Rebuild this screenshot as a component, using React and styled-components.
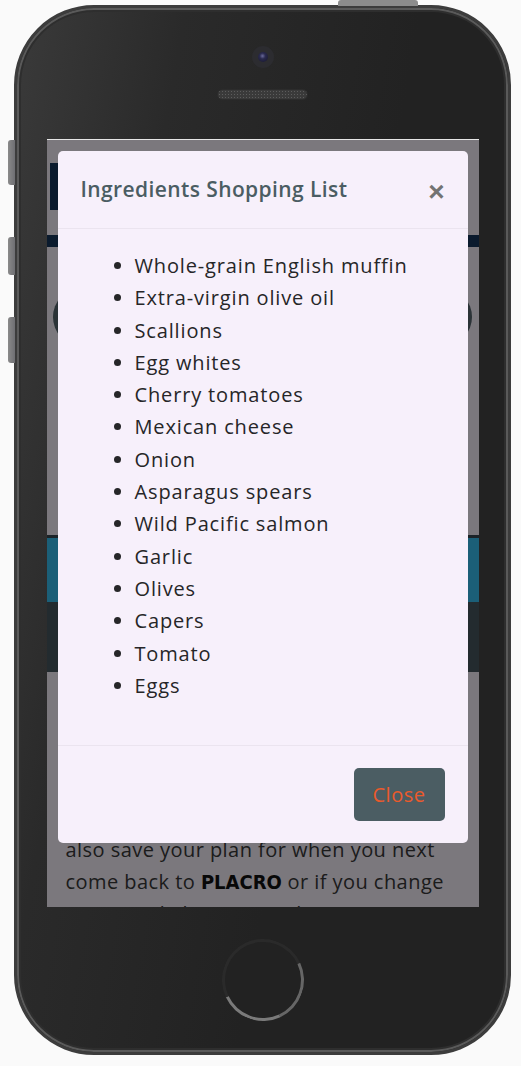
import React from "react";
import styled, { createGlobalStyle } from "styled-components";

const GlobalStyle = createGlobalStyle`
  html, body { margin: 0; padding: 0; background: #fafafa; }
  * { box-sizing: border-box; }
`;

const Stage = styled.div`
  width: 521px;
  height: 1066px;
  padding: 5px 0 0 14px;
  overflow: hidden;
`;

const Phone = styled.div`
  position: relative;
  width: 497px;
  height: 1050px;
  border-radius: 80px;
  border: 3px solid #3c3c3c;
  background: linear-gradient(100deg, #3a3a3a 0%, #2a2a2a 25%, #222 60%, #222 100%);
  box-shadow: inset 0 0 0 2px #5a5a5a, inset 0 0 0 4px #2e2e2e;
  display: flex;
  flex-direction: column;
  align-items: center;
`;

const SideButton = styled.div`
  position: absolute;
  left: -9px;
  top: ${(p) => p.$top}px;
  height: ${(p) => p.$h}px;
  width: 7px;
  border-radius: 3px 0 0 3px;
  background: linear-gradient(90deg, #8a8a8a, #6e6e72);
`;

const PowerButton = styled.div`
  position: absolute;
  top: -8px;
  left: 321px;
  width: 80px;
  height: 6px;
  border-radius: 3px 3px 0 0;
  background: #8c8c8c;
`;

const TopBezel = styled.div`
  height: 131px;
  display: flex;
  flex-direction: column;
  align-items: center;
  padding-top: 38px;
`;

const Camera = styled.div`
  width: 22px;
  height: 22px;
  border-radius: 50%;
  background: #2c2c30;
  display: flex;
  align-items: center;
  justify-content: center;
  &::after {
    content: "";
    width: 10px;
    height: 10px;
    border-radius: 50%;
    background: radial-gradient(circle at 45% 40%, #6a6a9a 0%, #2a2a4e 35%, #15152a 100%);
  }
`;

const Speaker = styled.div`
  margin-top: 22px;
  width: 89px;
  height: 9px;
  border-radius: 5px;
  background-color: #3a3a3a;
  background-image: radial-gradient(#5c5c5c 0.8px, transparent 1px);
  background-size: 3px 3px;
  box-shadow: 0 0 0 1px #2c2c2c;
`;

const Screen = styled.div`
  position: relative;
  width: 432px;
  height: 768px;
  overflow: hidden;
  background: #f7f0fb;
  border-top: 1px solid #e6e6e6;
`;

const Page = styled.div`
  display: flex;
  flex-direction: column;
  padding-top: 23px;
`;

const LogoBox = styled.div`
  margin-left: 3px;
  width: 220px;
  height: 47px;
  background: #15345a;
`;

const NavBand = styled.div`
  margin-top: 25px;
  height: 12px;
  background: #15345a;
`;

const SearchPill = styled.div`
  margin: 42px 7px 0 6px;
  height: 56px;
  border-radius: 28px / 30px;
  background: #56666e;
`;

const HeroLine = styled.div`
  margin-top: 190px;
  height: 3px;
  background: #364650;
`;

const HeroBand = styled.div`
  height: 64px;
  background: #36bef0;
`;

const DarkBand = styled.div`
  height: 70px;
  background: #46565e;
`;

const Paragraph = styled.p`
  margin: 162px 0 0;
  padding: 0 14px 0 19px;
  font-family: "Open Sans", sans-serif;
  font-size: 20px;
  line-height: 32px;
  letter-spacing: 0.45px;
  color: #383838;
`;

const Brand = styled.strong`
  font-family: "DejaVu Sans Condensed", "DejaVu Sans", sans-serif;
  font-weight: 700;
  letter-spacing: 0;
  color: #111;
`;

const Overlay = styled.div`
  position: absolute;
  inset: 0;
  background: rgba(0, 0, 0, 0.5);
  padding: 11px 11px 0;
`;

const Modal = styled.div`
  width: 410px;
  height: 692px;
  background: #f7f0fb;
  border-radius: 5px;
  display: flex;
  flex-direction: column;
`;

const Header = styled.div`
  height: 78px;
  display: flex;
  align-items: center;
  justify-content: space-between;
  padding: 0 23px 0 23px;
  border-bottom: 1px solid #ebe4ef;
`;

const Title = styled.h5`
  margin: 0 0 2px;
  font-family: "Open Sans", sans-serif;
  font-weight: 600;
  font-size: 21px;
  letter-spacing: 0.4px;
  color: #4b5d63;
`;

const CloseX = styled.span`
  font-family: "Liberation Sans", sans-serif;
  font-size: 28px;
  font-weight: 700;
  line-height: 1;
  color: #737373;
  margin-top: 4px;
`;

const Body = styled.div`
  flex: 1;
  padding: 21px 16px 0;
`;

const List = styled.ul`
  margin: 0;
  padding-left: 61px;
  font-family: "Open Sans", sans-serif;
  font-size: 20px;
  line-height: 32.3px;
  letter-spacing: 0.85px;
  color: #262628;
`;

const Footer = styled.div`
  height: 98px;
  border-top: 1px solid #ebe4ef;
  display: flex;
  justify-content: flex-end;
  align-items: flex-start;
  padding: 22px 23px 0 0;
`;

const CloseButton = styled.button`
  width: 91px;
  height: 53px;
  border: none;
  border-radius: 5px;
  background: #4b5d63;
  color: #ea5a2c;
  font-family: "Open Sans", sans-serif;
  font-size: 20px;
  letter-spacing: 0.5px;
`;

const BottomBezel = styled.div`
  flex: 1;
  display: flex;
  justify-content: center;
  padding-top: 32px;
`;

const HomeButton = styled.div`
  width: 82px;
  height: 82px;
  border-radius: 50%;
  border: 3px solid;
  border-color: #2a2a2a #666 #7a7a7a #2a2a2a;
  transform: rotate(20deg);
  background: #222;
`;

const items = [
  "Whole-grain English muffin",
  "Extra-virgin olive oil",
  "Scallions",
  "Egg whites",
  "Cherry tomatoes",
  "Mexican cheese",
  "Onion",
  "Asparagus spears",
  "Wild Pacific salmon",
  "Garlic",
  "Olives",
  "Capers",
  "Tomato",
  "Eggs",
];

export default function App() {
  return (
    <>
      <GlobalStyle />
      <Stage>
        <Phone>
          <PowerButton />
          <SideButton $top={132} $h={45} />
          <SideButton $top={229} $h={38} />
          <SideButton $top={309} $h={46} />
          <TopBezel>
            <Camera />
            <Speaker />
          </TopBezel>
          <Screen>
            <Page>
              <LogoBox />
              <NavBand />
              <SearchPill />
              <HeroLine />
              <HeroBand />
              <DarkBand />
              <Paragraph>
                also save your plan for when you next come back to <Brand>PLACRO</Brand> or if you change
                your mind about your plan, just start again.
              </Paragraph>
            </Page>
            <Overlay>
              <Modal>
                <Header>
                  <Title>Ingredients Shopping List</Title>
                  <CloseX>×</CloseX>
                </Header>
                <Body>
                  <List>
                    {items.map((it) => (
                      <li key={it}>{it}</li>
                    ))}
                  </List>
                </Body>
                <Footer>
                  <CloseButton>Close</CloseButton>
                </Footer>
              </Modal>
            </Overlay>
          </Screen>
          <BottomBezel>
            <HomeButton />
          </BottomBezel>
        </Phone>
      </Stage>
    </>
  );
}
